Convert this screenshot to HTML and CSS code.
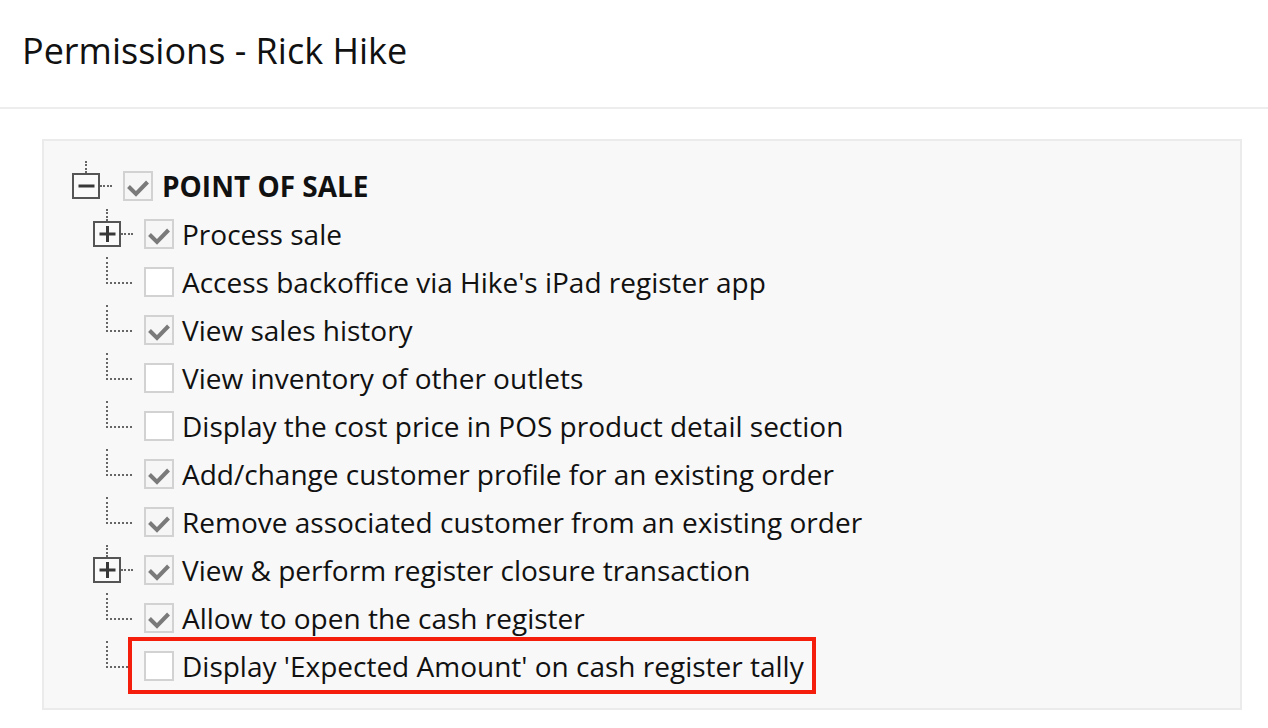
FILE: index.html
```html
<!DOCTYPE html>
<html lang="en">
<head>
  <meta charset="UTF-8" />
  <title>Permissions - Rick Hike</title>
  <link rel="stylesheet" href="styles.css">
</head>
<body>

  <div class="page-head">
    <h1>Permissions - Rick Hike</h1>
  </div>

  <div class="panel">
    <ul class="tree">

      <!-- root -->
      <li class="row">
        <span class="node">
          <span class="expander">
            <svg viewBox="0 0 23 22" width="23" height="22"><path d="M3.5 11h16" /></svg>
          </span>
          <span class="stub"></span>
        </span>
        <span class="check on"><svg viewBox="0 0 26 26" width="26" height="26"><path d="M3.5 13.5l7.5 7.5 11.5-12" /></svg></span>
        <span class="label root-label">POINT OF SALE</span>
      </li>

      <li class="row child">
        <span class="node">
          <span class="expander">
            <svg viewBox="0 0 23 22" width="23" height="22"><path d="M3.5 11h16M11.5 3v16" /></svg>
          </span>
          <span class="stub"></span>
        </span>
        <span class="check on"><svg viewBox="0 0 26 26" width="26" height="26"><path d="M3.5 13.5l7.5 7.5 11.5-12" /></svg></span>
        <span class="label">Process sale</span>
      </li>

      <li class="row child">
        <span class="node"><span class="elbow"></span></span>
        <span class="check"></span>
        <span class="label">Access backoffice via Hike's iPad register app</span>
      </li>

      <li class="row child">
        <span class="node"><span class="elbow"></span></span>
        <span class="check on"><svg viewBox="0 0 26 26" width="26" height="26"><path d="M3.5 13.5l7.5 7.5 11.5-12" /></svg></span>
        <span class="label">View sales history</span>
      </li>

      <li class="row child">
        <span class="node"><span class="elbow"></span></span>
        <span class="check"></span>
        <span class="label">View inventory of other outlets</span>
      </li>

      <li class="row child">
        <span class="node"><span class="elbow"></span></span>
        <span class="check"></span>
        <span class="label">Display the cost price in POS product detail section</span>
      </li>

      <li class="row child">
        <span class="node"><span class="elbow"></span></span>
        <span class="check on"><svg viewBox="0 0 26 26" width="26" height="26"><path d="M3.5 13.5l7.5 7.5 11.5-12" /></svg></span>
        <span class="label">Add/change customer profile for an existing order</span>
      </li>

      <li class="row child">
        <span class="node"><span class="elbow"></span></span>
        <span class="check on"><svg viewBox="0 0 26 26" width="26" height="26"><path d="M3.5 13.5l7.5 7.5 11.5-12" /></svg></span>
        <span class="label">Remove associated customer from an existing order</span>
      </li>

      <li class="row child">
        <span class="node">
          <span class="expander">
            <svg viewBox="0 0 23 22" width="23" height="22"><path d="M3.5 11h16M11.5 3v16" /></svg>
          </span>
          <span class="stub"></span>
        </span>
        <span class="check on"><svg viewBox="0 0 26 26" width="26" height="26"><path d="M3.5 13.5l7.5 7.5 11.5-12" /></svg></span>
        <span class="label">View &amp; perform register closure transaction</span>
      </li>

      <li class="row child">
        <span class="node"><span class="elbow"></span></span>
        <span class="check on"><svg viewBox="0 0 26 26" width="26" height="26"><path d="M3.5 13.5l7.5 7.5 11.5-12" /></svg></span>
        <span class="label">Allow to open the cash register</span>
      </li>

      <li class="row child">
        <span class="node"><span class="elbow"></span></span>
        <span class="highlight">
          <span class="check"></span>
          <span class="label">Display 'Expected Amount' on cash register tally</span>
        </span>
      </li>

    </ul>
  </div>

</body>
</html>
```

FILE: styles.css
```css
/* Reset */
* {
  margin: 0;
  padding: 0;
  box-sizing: border-box;
}

body {
  font-family: 'Open Sans', 'Noto Sans', sans-serif;
  background: #fff;
  color: #111;
}

.page-head {
  padding: 27px 22px 32px;
  border-bottom: 2px solid #ededed;
}

.page-head h1 {
  font-size: 36px;
  font-weight: 400;
  line-height: 48px;
  color: #111;
}

.panel {
  margin: 30px 26px 0 42px;
  width: 1200px;
  background: #f8f8f8;
  border: 2px solid #ebebeb;
  padding: 21px 0 18px 28px;
}

.tree {
  list-style: none;
}

.row {
  display: flex;
  align-items: center;
  height: 48px;
}

.row.child {
  padding-left: 21px;
}

/* tree connectors */
.node {
  display: flex;
  align-items: center;
  align-self: stretch;
  width: 40px;
  margin-right: 11px;
}

.expander {
  position: relative;
  display: flex;
  align-items: center;
  justify-content: center;
  width: 28px;
  height: 26px;
  border: 2px solid #555;
  background: #fafafa;
}

.expander::before {
  content: '';
  position: absolute;
  left: 11px;
  top: -14px;
  height: 12px;
  border-left: 2px dotted #666;
}

.expander svg path {
  stroke: #383838;
  stroke-width: 3;
  fill: none;
}

.stub {
  width: 12px;
  border-top: 2px dotted #666;
}

.elbow {
  align-self: flex-start;
  margin: -1px 0 0 13px;
  width: 26px;
  height: 27px;
  border-left: 2px dotted #666;
  border-bottom: 2px dotted #666;
}

/* checkboxes */
.check {
  display: flex;
  align-items: center;
  justify-content: center;
  flex: none;
  width: 30px;
  height: 30px;
  border: 2px solid #d2d2d2;
  background: #fff;
}

.check.on {
  background: #f6f6f6;
}

.check svg path {
  fill: none;
  stroke: #7a7a7a;
  stroke-width: 4;
}

.label {
  margin-left: 8px;
  font-size: 28px;
  line-height: 47px;
  white-space: nowrap;
}

.root-label {
  margin-left: 9px;
  font-weight: 700;
}

/* annotation box round the last item */
.highlight {
  position: relative;
  display: flex;
  align-items: center;
  height: 48px;
}

.highlight::after {
  content: '';
  position: absolute;
  left: -16px;
  right: -12px;
  top: -5px;
  bottom: -4px;
  border: 4px solid #f51d0c;
}
```
